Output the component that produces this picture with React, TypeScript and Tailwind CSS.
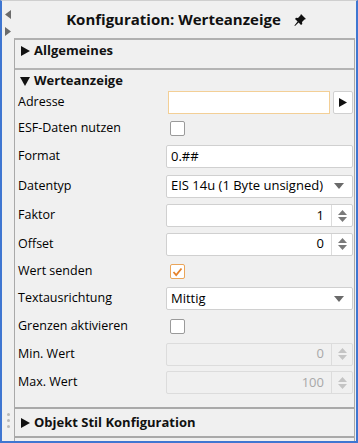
import React from "react";

const font = { fontFamily: '"Open Sans", "Noto Sans", sans-serif' };

function Label({ children }: { children: React.ReactNode }) {
  return <div className="w-[151px] shrink-0 pl-[3px] text-[12.5px] text-black">{children}</div>;
}

function Check({ checked }: { checked?: boolean }) {
  return (
    <div
      className={
        "ml-[4px] flex h-[15px] w-[15px] items-center justify-center rounded-[2px] border bg-white " +
        (checked ? "border-[#eaa55a]" : "border-[#9a9a9a]")
      }
    >
      {checked && (
        <svg width="11" height="10" viewBox="0 0 11 10">
          <path d="M1.5 5 L4.2 8 L9.5 1.5" fill="none" stroke="#e6822a" strokeWidth="1.8" />
        </svg>
      )}
    </div>
  );
}

function Spinner({ value, disabled }: { value: string; disabled?: boolean }) {
  return (
    <div
      className={
        "flex h-[23px] flex-1 rounded-[2px] border " +
        (disabled ? "border-[#dcdcdc] bg-[#f0f0f0]" : "border-[#d0d0d0] bg-white")
      }
    >
      <div
        className={
          "flex flex-1 items-center justify-end pr-[7px] text-[13px] " +
          (disabled ? "text-[#a8a8a8]" : "text-black")
        }
      >
        {value}
      </div>
      <div className="flex w-[21px] flex-col items-center justify-center gap-[2px] border-l border-[#dcdcdc]">
        <svg width="9" height="5" viewBox="0 0 9 5">
          <path d="M0 5 L4.5 0 L9 5 Z" fill={disabled ? "#c4c4c4" : "#7a7a7a"} />
        </svg>
        <svg width="9" height="5" viewBox="0 0 9 5">
          <path d="M0 0 L4.5 5 L9 0 Z" fill={disabled ? "#c4c4c4" : "#7a7a7a"} />
        </svg>
      </div>
    </div>
  );
}

function Select({ value }: { value: string }) {
  return (
    <div className="flex h-[23px] flex-1 items-center rounded-[2px] border border-[#d0d0d0] bg-white pl-[4px] pr-[8px]">
      <span className="flex-1 text-[13px] text-black">{value}</span>
      <svg width="10" height="6" viewBox="0 0 10 6">
        <path d="M0 0 L5 6 L10 0 Z" fill="#6a6a6a" />
      </svg>
    </div>
  );
}

function Row({ h, children }: { h: number; children: React.ReactNode }) {
  return (
    <div className="flex items-center pr-[1px]" style={{ height: h }}>
      {children}
    </div>
  );
}

function Tri({ dir }: { dir: "right" | "down" }) {
  return dir === "right" ? (
    <svg width="10" height="10" viewBox="0 0 10 10" className="mr-[4px]">
      <path d="M1 0 L10 5 L1 10 Z" fill="#111" />
    </svg>
  ) : (
    <svg width="10" height="10" viewBox="0 0 10 10" className="mr-[4px]">
      <path d="M0 1 L10 1 L5 10 Z" fill="#111" />
    </svg>
  );
}

export default function App() {
  return (
    <div
      className="flex h-[443px] w-[358px] border-x-2 border-b-2 border-t border-x-[#3f76d1] border-b-[#3f76d1] border-t-[#cfcfcf] bg-[#f0f0f0]"
      style={font}
    >
      {/* gutter */}
      <div className="flex w-[12px] shrink-0 flex-col items-center">
        <svg width="6" height="9" viewBox="0 0 6 9" className="mt-[9px]">
          <path d="M6 0 L0 4.5 L6 9 Z" fill="#6b6b6b" />
        </svg>
        <svg width="6" height="9" viewBox="0 0 6 9" className="mt-[8px]">
          <path d="M0 0 L6 4.5 L0 9 Z" fill="#6b6b6b" />
        </svg>
        <div className="mt-auto mb-[13px] flex flex-col gap-[3px]">
          <div className="h-[3px] w-[3px] rounded-full bg-[#b8b8b8]" />
          <div className="h-[3px] w-[3px] rounded-full bg-[#b8b8b8]" />
          <div className="h-[3px] w-[3px] rounded-full bg-[#b8b8b8]" />
        </div>
      </div>

      {/* main */}
      <div className="flex flex-1 flex-col">
        <div className="flex h-[37px] items-center justify-center pl-[2px]">
          <span className="text-[15px] font-bold text-[#111]">Konfiguration: Werteanzeige</span>
          <svg width="12" height="12" viewBox="0 0 12 12" className="ml-[13px]">
            <path d="M7 0 L12 5 L10.5 5.6 L8 8 L8.3 10 L7 11 L4.6 8.4 L1 12 L0.4 11.6 L3.6 7.4 L1 5 L2 3.7 L4 4 L6.4 1.5 Z" fill="#111" />
          </svg>
        </div>

        <div className="mr-[1px] flex flex-1 flex-col border-x border-t-2 border-[#a9a9a9] border-t-[#b0b0b0]">
          {/* Allgemeines */}
          <div className="h-[30px] border-b-2 border-[#b4b4b4] pt-[1px]">
            <div className="flex items-center pl-[5px] text-[13px] font-bold text-[#111]">
              <Tri dir="right" />
              Allgemeines
            </div>
          </div>

          {/* Werteanzeige */}
          <div className="flex h-[339px] flex-col border-b-2 border-[#a9a9a9]">
            <div className="flex h-[19px] items-center pl-[5px] pt-[2px] text-[13px] font-bold text-[#111]">
              <Tri dir="down" />
              Werteanzeige
            </div>
            <Row h={26}>
              <Label>Adresse</Label>
              <div className="ml-[2px] h-[23px] flex-1 border border-[#f3cf96] bg-white" />
              <div className="ml-[3px] flex h-[23px] w-[20px] items-center justify-center rounded-[2px] border border-[#d0d0d0] bg-white">
                <svg width="8" height="9" viewBox="0 0 8 9">
                  <path d="M0 0 L8 4.5 L0 9 Z" fill="#111" />
                </svg>
              </div>
            </Row>
            <Row h={27}>
              <Label>ESF-Daten nutzen</Label>
              <Check />
            </Row>
            <Row h={29}>
              <Label>Format</Label>
              <div className="flex h-[23px] flex-1 items-center rounded-[2px] border border-[#d0d0d0] bg-white pl-[4px] text-[13px] text-black">
                0.##
              </div>
            </Row>
            <Row h={30}>
              <Label>Datentyp</Label>
              <Select value="EIS 14u (1 Byte unsigned)" />
            </Row>
            <Row h={29}>
              <Label>Faktor</Label>
              <Spinner value="1" />
            </Row>
            <Row h={28}>
              <Label>Offset</Label>
              <Spinner value="0" />
            </Row>
            <Row h={27}>
              <Label>Wert senden</Label>
              <Check checked />
            </Row>
            <Row h={27}>
              <Label>Textausrichtung</Label>
              <Select value="Mittig" />
            </Row>
            <Row h={28}>
              <Label>Grenzen aktivieren</Label>
              <Check />
            </Row>
            <Row h={28}>
              <Label>Min. Wert</Label>
              <Spinner value="0" disabled />
            </Row>
            <Row h={29}>
              <Label>Max. Wert</Label>
              <Spinner value="100" disabled />
            </Row>
          </div>

          {/* Objekt Stil */}
          <div className="flex h-[29px] items-center border-b-2 border-[#a9a9a9] pl-[5px] text-[13px] font-bold text-[#111]">
            <Tri dir="right" />
            Objekt Stil Konfiguration
          </div>
          <div className="h-[2px]" />
        </div>
      </div>
    </div>
  );
}
